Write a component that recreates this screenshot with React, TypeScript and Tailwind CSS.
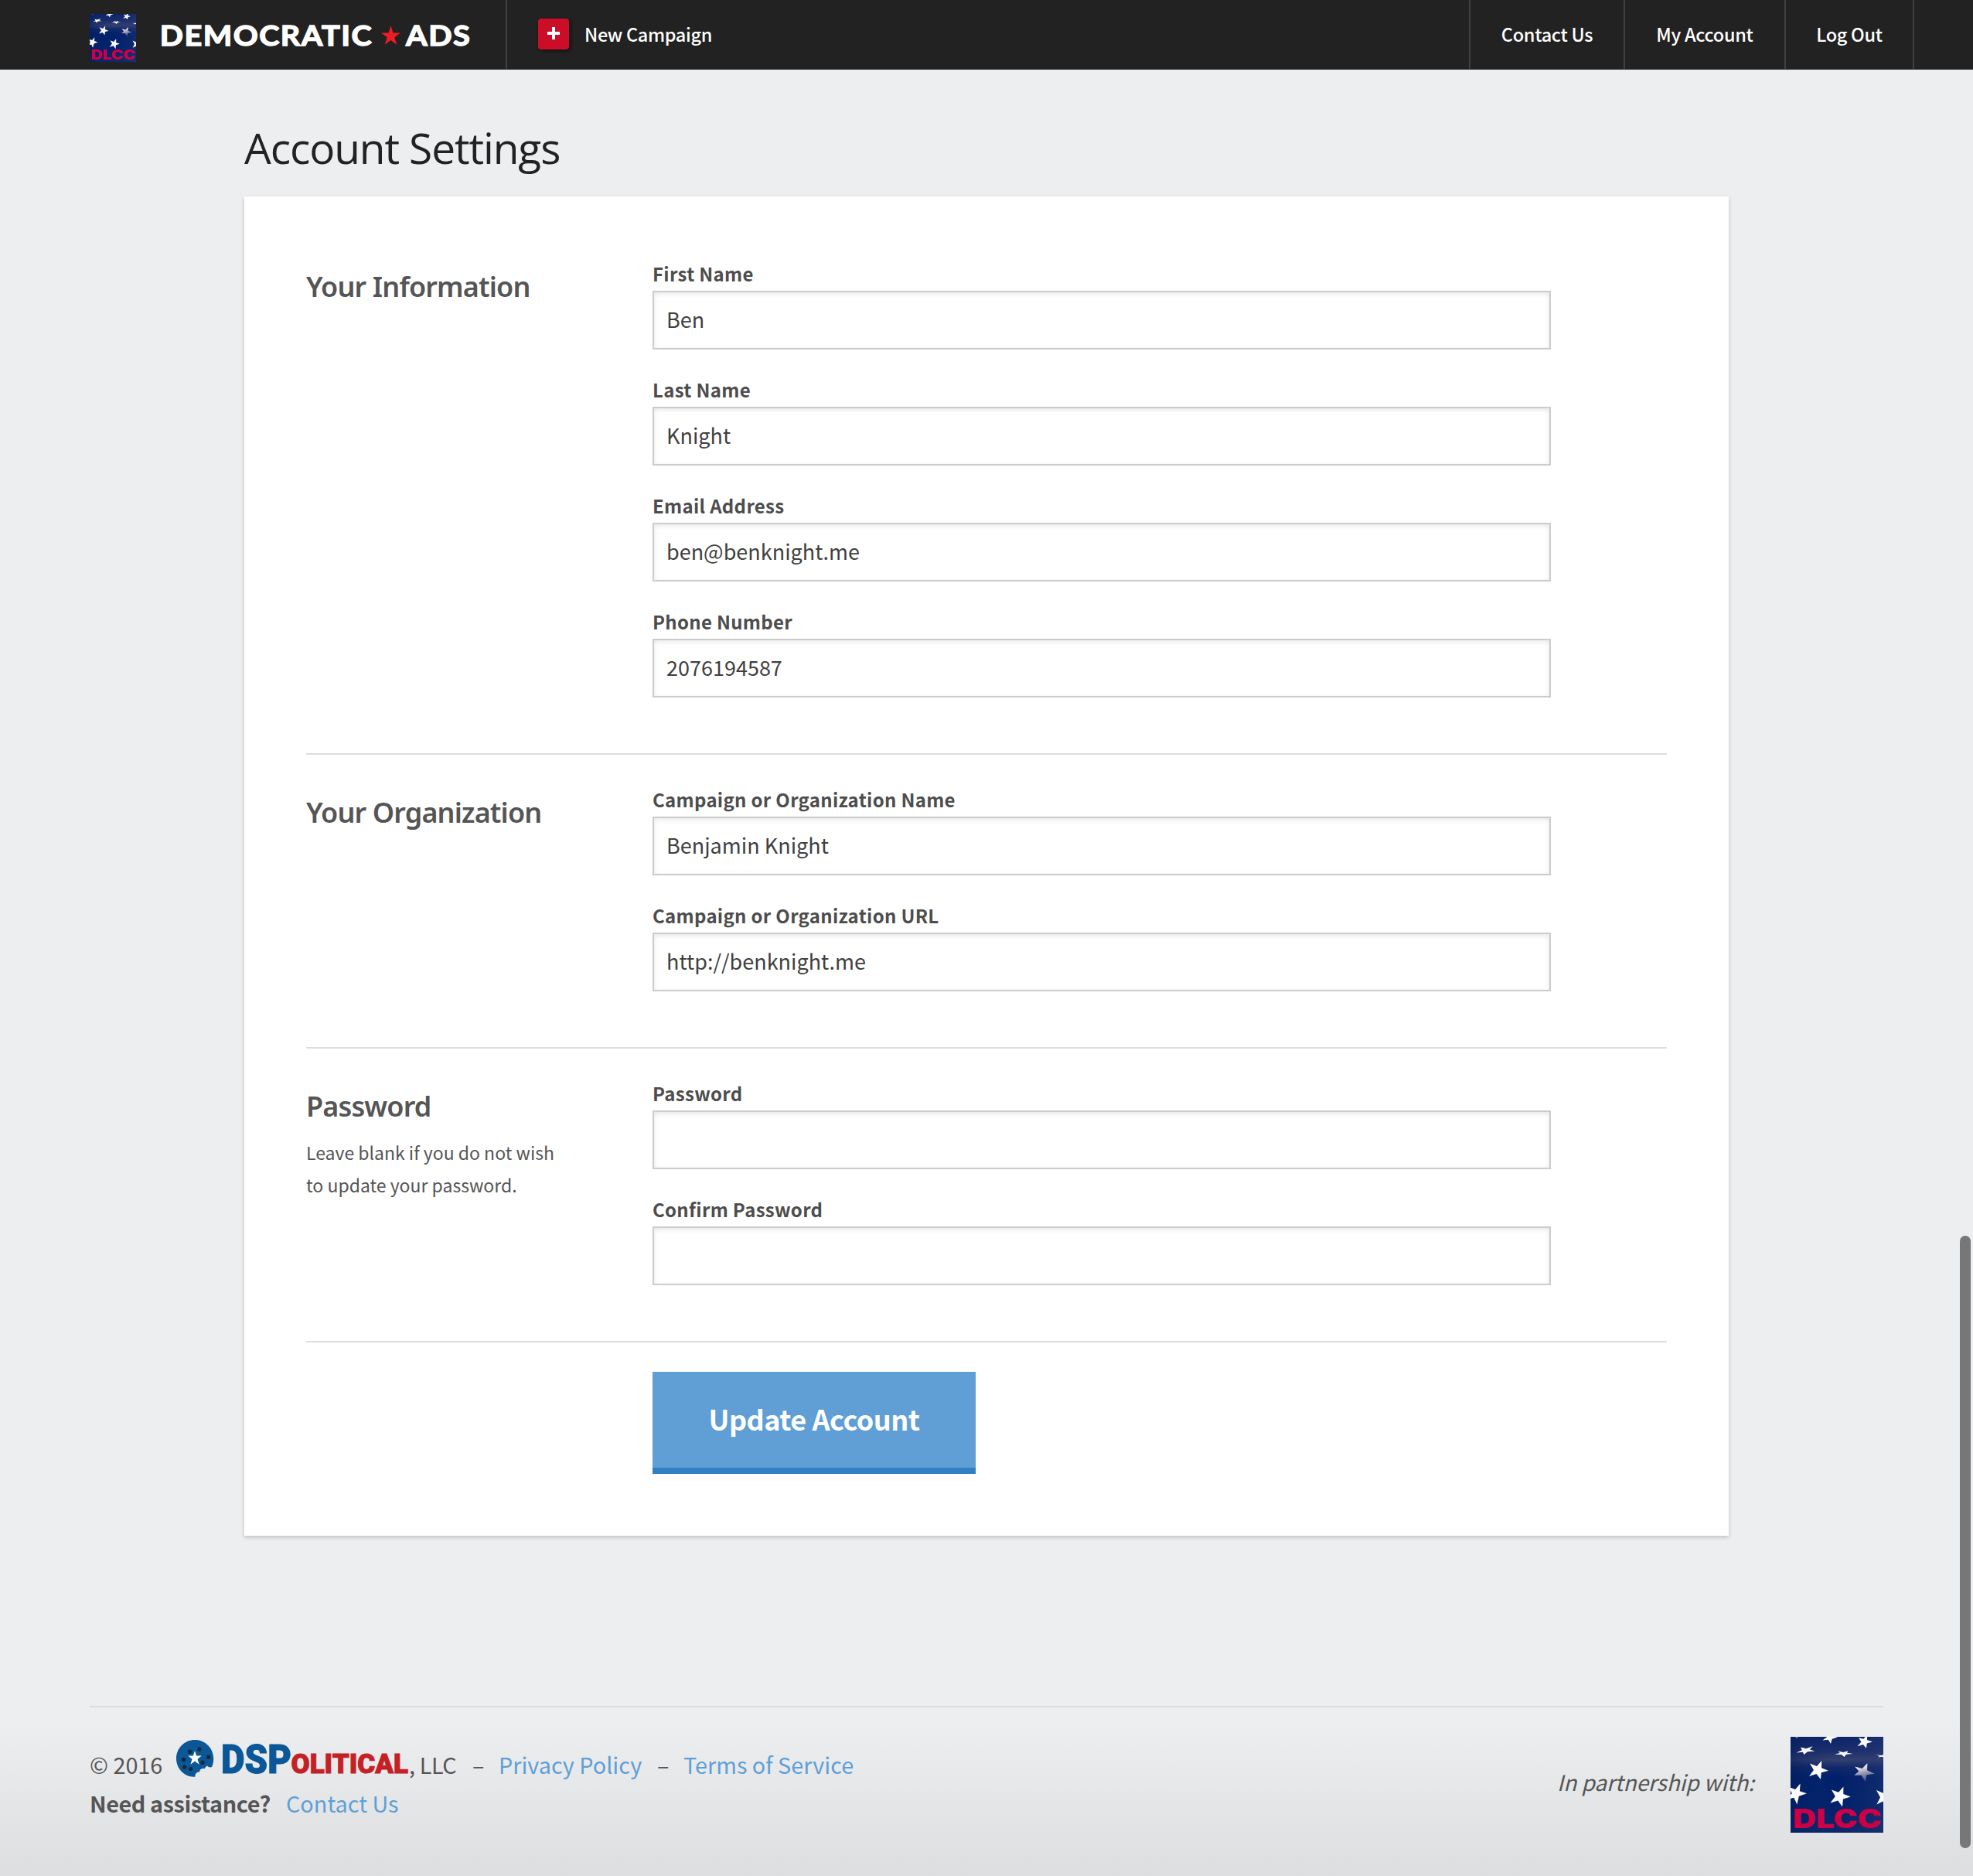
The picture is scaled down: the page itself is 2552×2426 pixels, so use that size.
import React, { useId } from "react";

type Point = [number, number];

/* Builds a five-pointed star outline from its tips, so it can be skewed freely. */
function starPoints(tips: Point[]): string {
  const cx = tips.reduce((s, p) => s + p[0], 0) / 5;
  const cy = tips.reduce((s, p) => s + p[1], 0) / 5;
  return tips
    .flatMap((p, i) => {
      const n = tips[(i + 1) % 5];
      const mx = (p[0] + n[0]) / 2;
      const my = (p[1] + n[1]) / 2;
      return [p, [cx + (mx - cx) * 0.5, cy + (my - cy) * 0.5] as Point];
    })
    .map((p) => p[0].toFixed(2) + "," + p[1].toFixed(2))
    .join(" ");
}

const FLAG_STARS: Point[][] = [
  [[44.5, -4], [56, -6], [61, 0.6], [52, 9], [41.3, 4.5]],
  [[88, 1.3], [99, -3], [106, 6.6], [98, 14.8], [86.6, 12.2]],
  [[13, 13.6], [28.6, 12.2], [31.4, 18.6], [17.4, 23], [7.4, 20.4]],
  [[61.5, 18.4], [74.3, 18.2], [80.8, 22], [69.6, 26], [56.8, 22.8]],
  [[110.5, 23.6], [122, 22.6], [127, 25], [122, 27], [113, 26.4]],
  [[25, 34.6], [40.2, 31], [49, 43.8], [39, 55], [24, 51]],
  [[83.2, 38.4], [99.4, 34.2], [108.8, 47.8], [96.8, 58], [82.2, 49.8]],
  [[-2, 65], [12.6, 60.6], [21, 73.2], [8.4, 87.4], [-5, 81]],
  [[53, 68.4], [68.4, 64.4], [77.8, 77.4], [67, 90.6], [51.4, 85.4]],
  [[111, 69], [126, 66], [132, 78], [124, 90], [111.4, 87.6]],
];

function FlagLogo({ className }: { className: string }) {
  const id = useId();
  return (
    <svg
      viewBox="0 0 120 124"
      preserveAspectRatio="none"
      className={`overflow-visible ${className}`}
      aria-label="DLCC"
    >
      <defs>
        <clipPath id={`${id}clip`}>
          <rect width="120" height="124" />
        </clipPath>
        <linearGradient id={`${id}field`} x1="0" y1="0" x2="0" y2="1">
          <stop offset="0" stopColor="#0b2468" />
          <stop offset="0.14" stopColor="#1b2d6c" />
          <stop offset="0.24" stopColor="#35406f" />
          <stop offset="0.32" stopColor="#10286a" />
          <stop offset="0.42" stopColor="#00206a" />
          <stop offset="0.8" stopColor="#02226b" />
          <stop offset="1" stopColor="#0d2868" />
        </linearGradient>
        <linearGradient id={`${id}shade`} x1="0" y1="0" x2="1" y2="0">
          <stop offset="0" stopColor="#001c5c" stopOpacity="0.5" />
          <stop offset="0.5" stopColor="#1d3270" stopOpacity="0" />
          <stop offset="1" stopColor="#2a3c76" stopOpacity="0.4" />
        </linearGradient>
        <linearGradient id={`${id}star`} x1="0" y1="0" x2="0.3" y2="1">
          <stop offset="0.2" stopColor="#ffffff" />
          <stop offset="0.6" stopColor="#9a9cb5" />
          <stop offset="1" stopColor="#4a5284" />
        </linearGradient>
      </defs>
      <g clipPath={`url(#${id}clip)`}>
        <rect width="120" height="124" fill={`url(#${id}field)`} />
        <rect width="120" height="124" fill={`url(#${id}shade)`} />
        <path d="M6 0h4l-2 2.5z" fill="#6f7898" />
        {FLAG_STARS.map((tips, i) => (
          <polygon key={i} points={starPoints(tips)} fill={i === 6 ? `url(#${id}star)` : "#fbfbfd"} />
        ))}
      </g>
      <text
        x="3"
        y="117.8"
        textLength="114.5"
        lengthAdjust="spacingAndGlyphs"
        fontSize="33.5"
        fontWeight="900"
        fill="#cd0045"
        className="font-['Inter',sans-serif]"
      >
        DLCC
      </text>
    </svg>
  );
}

function BrandWordmark() {
  return (
    <svg viewBox="0 0 410 60" className="h-[60px] w-[410px] overflow-visible">
      <g
        fontSize="37"
        fontWeight="700"
        fill="#ffffff"
        stroke="#ffffff"
        strokeWidth="1.4"
        letterSpacing="1.4"
        className="font-['Lato',sans-serif]"
      >
        <text x="0.8" y="42.6" textLength="275.5" lengthAdjust="spacingAndGlyphs">
          DEMOCRATIC
        </text>
        <text x="319" y="42.6" textLength="84.5" lengthAdjust="spacingAndGlyphs">
          ADS
        </text>
      </g>
      <polygon
        fill="#ef1c25"
        points="299.5,17 302.4,26.4 312,26.4 304.3,32.2 307.2,41.8 299.5,36 291.8,41.8 294.7,32.2 287,26.4 296.6,26.4"
      />
    </svg>
  );
}

function DspLogo() {
  return (
    <svg viewBox="0 -8 301 66" className="-mt-[15px] ml-[19px] h-[66px] w-[301px] shrink-0 overflow-visible">
      <path
        fill="#0b5797"
        d="M24 0C37.5 0 48.2 10.8 48.2 24.6c0 3.5-.7 7.200-2 10.200-1.7 1-4.7.8-6.200-1.300-1.500 1-3 2.300-3.400 3.700-2.600-.8-5.600 0-6.200 2.600.4 1-.6 1.800-1.800 1.800-2.800.6-4.600 2.800-4.200 6.200C11 48.600 0 37.600 0 24.300 0 10.600 10.800 0 24 0z"
      />
      <g fill="#15283a">
        <circle cx="30" cy="12" r="2.7" />
        <circle cx="17.6" cy="15.3" r="2.7" />
        <circle cx="41.6" cy="22.3" r="2.7" />
        <circle cx="9.5" cy="25.5" r="2.7" />
        <circle cx="34" cy="29.3" r="2.7" />
        <circle cx="10.7" cy="35.3" r="2.7" />
        <circle cx="18.6" cy="37.6" r="2.7" />
      </g>
      <polygon
        fill="#ffffff"
        points="24,14 26.1,20.5 32.8,20.5 27.5,24.7 29.6,31.7 24,27.5 18.4,31.7 20.5,24.7 15.2,20.5 21.9,20.5"
      />
      <g fontWeight="900" strokeWidth="1" className="font-['Roboto',sans-serif]">
        <text
          x="58"
          y="42.8"
          fontSize="51.5"
          textLength="91"
          lengthAdjust="spacingAndGlyphs"
          fill="#0b5797"
          stroke="#0b5797"
        >
          DSP
        </text>
        <text
          x="148.5"
          y="42.8"
          fontSize="35.5"
          textLength="151.5"
          lengthAdjust="spacingAndGlyphs"
          fill="#c42126"
          stroke="#c42126"
        >
          OLITICAL
        </text>
      </g>
    </svg>
  );
}

function NavLink({ label, className }: { label: string; className: string }) {
  return (
    <a
      className={`flex h-full justify-center border-r-2 border-[#404040] text-[23.5px] leading-[89px] font-medium tracking-[-0.3px] text-white ${className}`}
    >
      {label}
    </a>
  );
}

function Header() {
  return (
    <header className="flex h-[90px] border-b border-[#1a181b] bg-[#222222]">
      <div className="flex w-[656px] border-r-2 border-[#404040] pl-[116px]">
        <FlagLogo className="mt-[18px] h-[62px] w-[60px] shrink-0" />
        <div className="mt-4 ml-[30px]">
          <BrandWordmark />
        </div>
      </div>
      <div className="flex pl-10">
        <span className="mt-6 flex h-10 w-10 justify-center rounded bg-[#cb0d27] pt-[11px] shadow-[2px_2px_4px_rgba(0,0,0,0.5)]">
          <svg viewBox="0 0 16 16" className="h-4 w-4">
            <path d="M6 0h4v6h6v4h-6v6H6v-6H0V6h6z" fill="#ffffff" />
          </svg>
        </span>
        <span className="ml-5 text-[23.5px] leading-[89px] font-medium tracking-[-0.35px] text-white">
          New Campaign
        </span>
      </div>
      <nav className="mr-[76px] ml-auto flex border-l-2 border-[#404040]">
        <NavLink label="Contact Us" className="w-[200px]" />
        <NavLink label="My Account" className="w-[208px]" />
        <NavLink label="Log Out" className="w-[166px]" />
      </nav>
    </header>
  );
}

function Field({ label, value = "" }: { label: string; value?: string }) {
  return (
    <label className="block">
      <span className="block h-10 text-[24px] leading-[35px] font-bold tracking-[0.3px] text-[#4d4d4d]">{label}</span>
      <span className="block h-[76px] border-2 border-[#cccccc] bg-white px-4 text-[27px] leading-[70px] text-[#404040] shadow-[inset_0_2px_6px_rgba(0,0,0,0.1)]">
        {value}
      </span>
    </label>
  );
}

function Section({
  title,
  note,
  fields,
  className = "pt-10",
}: {
  title: string;
  note?: React.ReactNode;
  fields: [string, string?][];
  className?: string;
}) {
  return (
    <section className={`flex border-b-2 border-[#dddddd] pb-[72px] ${className}`}>
      <div className="w-[448px] shrink-0">
        <h2 className="h-[68px] text-[36px] leading-[70px] font-semibold tracking-[-0.85px] text-[#555555] font-['Noto_Sans',sans-serif]">
          {title}
        </h2>
        {note && <p className="mt-[5px] text-[23px] leading-[42px] whitespace-nowrap text-[#555555]">{note}</p>}
      </div>
      <div className="flex w-[1162px] flex-col gap-[34px]">
        {fields.map(([label, value]) => (
          <Field key={label} label={label} value={value} />
        ))}
      </div>
    </section>
  );
}

function Footer() {
  return (
    <footer className="mx-[116px] mt-[220px] flex justify-between border-t-2 border-[#dbdcde] text-[28.8px] text-[#555555]">
      <div className="pt-[49px] leading-[50px]">
        <div className="flex h-[50px] whitespace-nowrap">
          <span className="w-[93px]">© 2016</span>
          <DspLogo />
          <span className="w-[82px] tracking-[-0.4px]">, LLC</span>
          <span className="w-[34px]">–</span>
          <a className="w-[205px] text-[#5f9fd6]">Privacy Policy</a>
          <span className="w-[34px]">–</span>
          <a className="text-[#5f9fd6]">Terms of Service</a>
        </div>
        <div className="flex h-[50px] whitespace-nowrap">
          <span className="w-[254px] font-bold tracking-[-0.4px]">Need assistance?</span>
          <a className="text-[#5f9fd6]">Contact Us</a>
        </div>
      </div>
      <div className="flex pt-[38px]">
        <span className="mr-[47px] text-[28px] leading-[117px] tracking-[-0.05px] italic">In partnership with:</span>
        <FlagLogo className="h-[124px] w-[120px] shrink-0" />
      </div>
    </footer>
  );
}

export default function App() {
  return (
    <div className="relative h-[2426px] w-[2552px] overflow-hidden bg-[linear-gradient(to_bottom,#edeef0_2226px,#dddee0_2426px)] font-['Noto_Sans_CJK_JP',sans-serif]">
      <Header />
      <main className="mx-auto w-[1920px]">
        <h1 className="h-[164px] pt-[63px] text-[55px] leading-[76px] tracking-[-1.1px] text-[#222222] font-['Open_Sans',sans-serif]">
          Account Settings
        </h1>
        <div className="h-[1732px] bg-white px-20 shadow-[0_2px_5px_rgba(0,0,0,0.2)]">
          <Section
            title="Your Information"
            className="pt-[82px]"
            fields={[
              ["First Name", "Ben"],
              ["Last Name", "Knight"],
              ["Email Address", "ben@benknight.me"],
              ["Phone Number", "2076194587"],
            ]}
          />
          <Section
            title="Your Organization"
            fields={[
              ["Campaign or Organization Name", "Benjamin Knight"],
              ["Campaign or Organization URL", "http://benknight.me"],
            ]}
          />
          <Section
            title="Password"
            note={
              <>
                Leave blank if you do not wish
                <br />
                to update your password.
              </>
            }
            fields={[["Password"], ["Confirm Password"]]}
          />
          <button className="mt-[38px] ml-[448px] block h-[132px] w-[418px] border-b-8 border-[#337fc3] bg-[#609fd5] pb-[4px] text-[36px] leading-[120px] font-bold tracking-[-0.5px] text-white">
            Update Account
          </button>
        </div>
      </main>
      <Footer />
      <div className="absolute top-[1598px] right-[3px] h-[792px] w-[14px] rounded-full bg-[#777777]" />
    </div>
  );
}
